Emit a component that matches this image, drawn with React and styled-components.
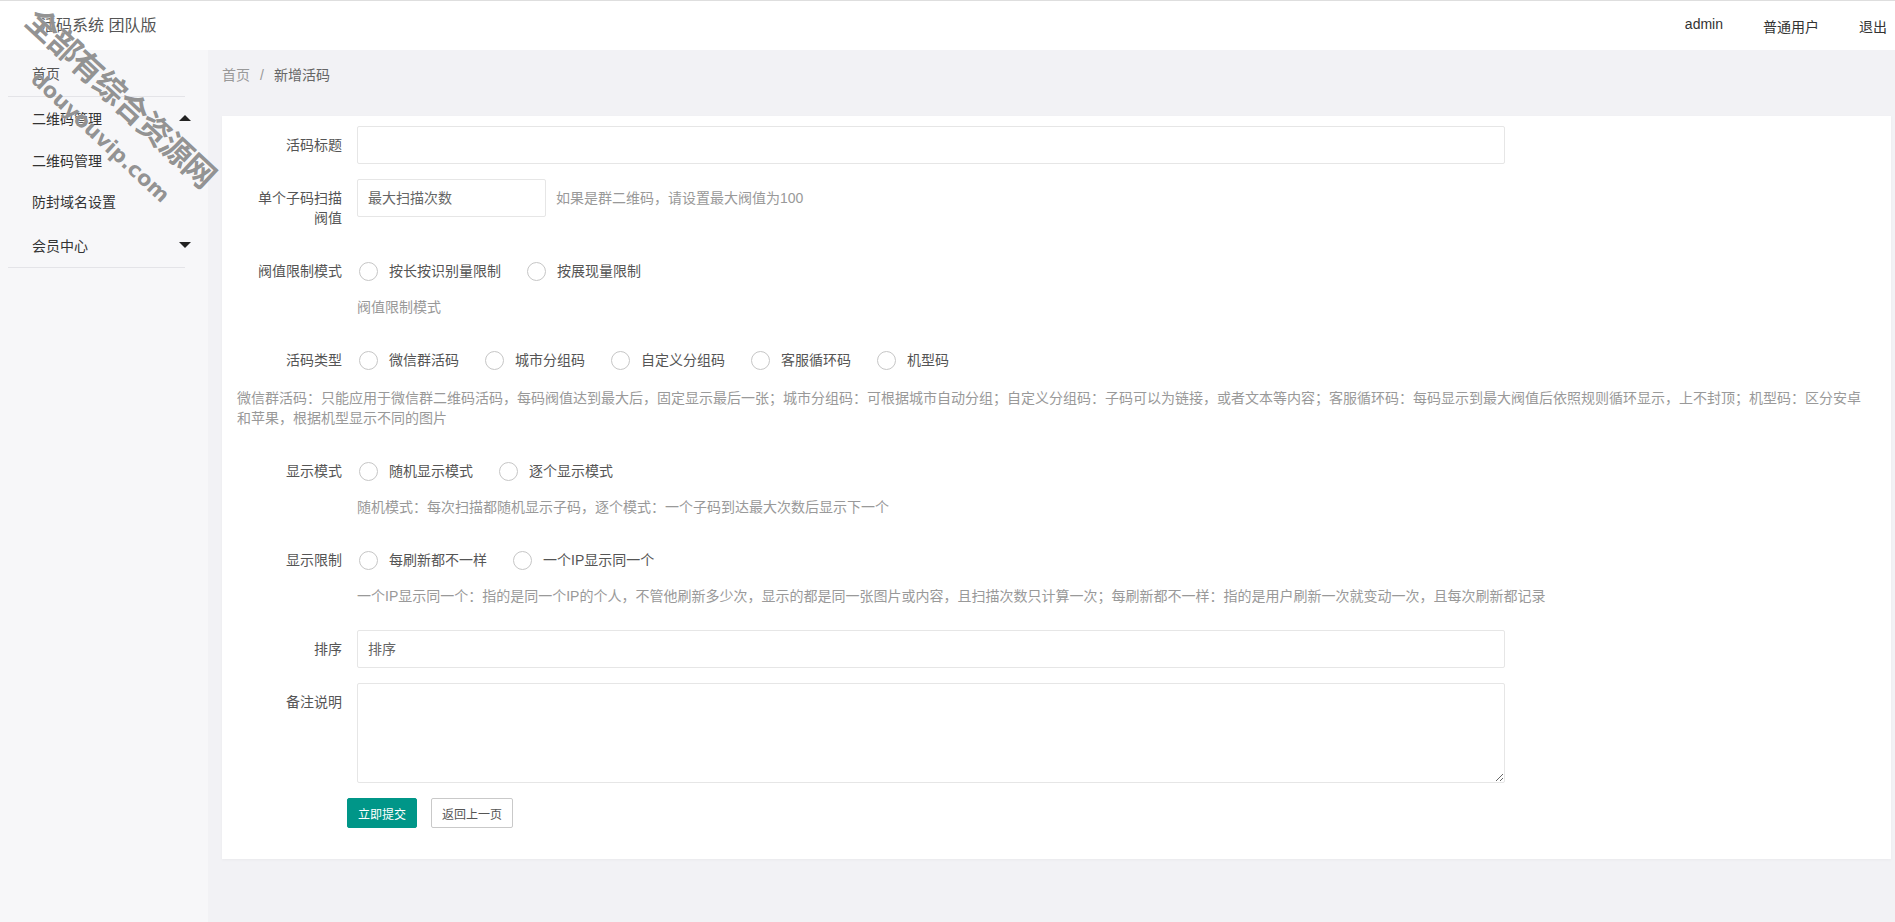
import React from "react";
import styled, { createGlobalStyle } from "styled-components";

const GlobalStyle = createGlobalStyle`
  html, body {
    margin: 0;
    padding: 0;
    background: #f2f2f5;
  }
  body {
    font-family: "Helvetica Neue", "Liberation Sans", "Noto Sans CJK SC", sans-serif;
    font-size: 14px;
    color: #333;
  }
  * {
    box-sizing: border-box;
  }
`;

const Page = styled.div`
  position: relative;
  min-height: 922px;
  display: flex;
  flex-direction: column;
  overflow: hidden;
`;

const Header = styled.header`
  height: 50px;
  background: #fff;
  border-top: 1px solid #dedede;
  display: flex;
  align-items: center;
  justify-content: space-between;
  padding: 0 8px 0 40px;
`;

const Logo = styled.div`
  font-size: 16px;
  color: #555;
  line-height: 20px;
`;

const HeaderNav = styled.nav`
  display: flex;
  gap: 40px;
  font-size: 14px;
  color: #333;
`;

const Body = styled.div`
  flex: 1;
  display: flex;
`;

const Sidebar = styled.aside`
  width: 208px;
  flex-shrink: 0;
  background: #f7f7f9;
  padding: 0 23px 0 8px;
`;

const NavItem = styled.div`
  height: ${(p) => p.$h || 42}px;
  display: flex;
  align-items: center;
  justify-content: space-between;
  padding: 0 0 0 24px;
  color: ${(p) => p.$muted ? "#555" : "#333"};
  border-bottom: ${(p) => p.$line ? "1px solid #e4e4e8" : "none"};
`;

const Arrow = styled.span`
  width: 0;
  height: 0;
  margin-right: -6px;
  border-left: 6px solid transparent;
  border-right: 6px solid transparent;
  ${(p) => p.$up ? "border-bottom: 6px solid #222;" : "border-top: 6px solid #222;"}
`;

const Main = styled.main`
  flex: 1;
  padding: 0 4px 63px 14px;
`;

const Breadcrumb = styled.div`
  height: 66px;
  padding-top: 15px;
  line-height: 20px;
  font-size: 14px;
  color: #999;
  display: flex;
  gap: 10px;

  & > b {
    font-weight: normal;
    color: #666;
  }
`;

const Card = styled.section`
  background: #fff;
  padding: 10px 15px 16px;
  box-shadow: 0 1px 3px rgba(0, 0, 0, 0.04);
`;

const FormItem = styled.div`
  display: flex;
  align-items: flex-start;
  margin-bottom: ${(p) => p.$mb ?? 15}px;
`;

const Label = styled.label`
  width: 120px;
  flex-shrink: 0;
  padding: 9px 15px;
  line-height: 20px;
  text-align: right;
  color: #555;
  font-size: 14px;
`;

const Block = styled.div`
  flex: 1;
  min-width: 0;
  display: ${(p) => p.$inline ? "flex" : "block"};
  align-items: flex-start;
`;

const Input = styled.input`
  display: block;
  width: ${(p) => p.$w || "1148px"};
  height: 38px;
  border: 1px solid #e6e6e6;
  border-radius: 2px;
  padding: 0 10px;
  font: inherit;
  font-size: 14px;
  color: #333;
  background: #fff;
  outline: none;

  &::placeholder {
    color: #666;
  }
`;

const TextArea = styled.textarea`
  display: block;
  width: 1148px;
  height: 100px;
  border: 1px solid #e6e6e6;
  border-radius: 2px;
  padding: 6px 10px;
  font: inherit;
  resize: vertical;
  outline: none;
`;

const Aux = styled.div`
  color: #999;
  font-size: 14px;
  line-height: 20px;
  padding: ${(p) => p.$side ? "9px 0 9px 10px" : "7px 0 9px"};
`;

const LongHelp = styled.p`
  margin: 0 0 15px;
  padding: 9px 0;
  max-width: 1630px;
  color: #999;
  font-size: 14px;
  line-height: 20px;
`;

const RadioGroup = styled.div`
  height: 38px;
  display: flex;
  align-items: center;
  padding-left: 2px;
`;

const RadioItem = styled.span`
  display: flex;
  align-items: center;
  margin-right: 26px;
  color: #555;
  font-size: 14px;
  line-height: 20px;
`;

const Circle = styled.i`
  width: 19px;
  height: 19px;
  border: 1px solid #c6c6c6;
  border-radius: 50%;
  margin-right: 11px;
`;

const ButtonRow = styled.div`
  display: flex;
  gap: 14px;
  margin: 0 0 15px 110px;
`;

const Button = styled.button`
  height: 30px;
  padding: 0 10px;
  font: inherit;
  font-size: 12px;
  border-radius: 2px;
  cursor: pointer;
  background: ${(p) => p.$primary ? "#009688" : "#fff"};
  color: ${(p) => p.$primary ? "#fff" : "#555"};
  border: 1px solid ${(p) => p.$primary ? "#009688" : "#c9c9c9"};
`;

const Watermark = styled.div`
  position: absolute;
  left: 31px;
  top: -2px;
  transform: rotate(43deg);
  transform-origin: 0 17px;
  pointer-events: none;
  color: rgba(105, 105, 105, 0.72);
  font-weight: 700;
  text-shadow: 0 0 1px #fff;
  white-space: nowrap;
`;

const MarkTitle = styled.div`
  font-size: 32px;
  line-height: 34px;
  letter-spacing: -1.5px;
`;

const MarkUrl = styled.div`
  font-family: "DejaVu Sans", "Liberation Sans", sans-serif;
  font-size: 21px;
  line-height: 24px;
  margin: 13px 0 0 44px;
`;

const Radios = ({ items }) => (
  <RadioGroup>
    {items.map((t) => (
      <RadioItem key={t}>
        <Circle />
        {t}
      </RadioItem>
    ))}
  </RadioGroup>
);

export default function App() {
  return (
    <Page>
      <GlobalStyle />
      <Header>
        <Logo>活码系统 团队版</Logo>
        <HeaderNav>
          <span>admin</span>
          <span>普通用户</span>
          <span>退出</span>
        </HeaderNav>
      </Header>
      <Body>
        <Sidebar>
          <NavItem $h={47} $line $muted>首页</NavItem>
          <NavItem>
            二维码管理
            <Arrow $up />
          </NavItem>
          <NavItem $h={41}>二维码管理</NavItem>
          <NavItem>防封域名设置</NavItem>
          <NavItem $h={46} $line>
            会员中心
            <Arrow />
          </NavItem>
        </Sidebar>
        <Main>
          <Breadcrumb>
            <span>首页</span>
            <span>/</span>
            <b>新增活码</b>
          </Breadcrumb>
          <Card>
            <FormItem>
              <Label>活码标题</Label>
              <Block>
                <Input />
              </Block>
            </FormItem>
            <FormItem>
              <Label>单个子码扫描阀值</Label>
              <Block $inline>
                <Input $w="189px" placeholder="最大扫描次数" />
                <Aux $side>如果是群二维码，请设置最大阀值为100</Aux>
              </Block>
            </FormItem>
            <FormItem>
              <Label>阀值限制模式</Label>
              <Block>
                <Radios items={["按长按识别量限制", "按展现量限制"]} />
                <Aux>阀值限制模式</Aux>
              </Block>
            </FormItem>
            <FormItem $mb={0}>
              <Label>活码类型</Label>
              <Block>
                <Radios items={["微信群活码", "城市分组码", "自定义分组码", "客服循环码", "机型码"]} />
              </Block>
            </FormItem>
            <LongHelp>
              微信群活码：只能应用于微信群二维码活码，每码阀值达到最大后，固定显示最后一张；城市分组码：可根据城市自动分组；自定义分组码：子码可以为链接，或者文本等内容；客服循环码：每码显示到最大阀值后依照规则循环显示，上不封顶；机型码：区分安卓和苹果，根据机型显示不同的图片
            </LongHelp>
            <FormItem>
              <Label>显示模式</Label>
              <Block>
                <Radios items={["随机显示模式", "逐个显示模式"]} />
                <Aux>随机模式：每次扫描都随机显示子码，逐个模式：一个子码到达最大次数后显示下一个</Aux>
              </Block>
            </FormItem>
            <FormItem>
              <Label>显示限制</Label>
              <Block>
                <Radios items={["每刷新都不一样", "一个IP显示同一个"]} />
                <Aux>一个IP显示同一个：指的是同一个IP的个人，不管他刷新多少次，显示的都是同一张图片或内容，且扫描次数只计算一次；每刷新都不一样：指的是用户刷新一次就变动一次，且每次刷新都记录</Aux>
              </Block>
            </FormItem>
            <FormItem>
              <Label>排序</Label>
              <Block>
                <Input placeholder="排序" />
              </Block>
            </FormItem>
            <FormItem>
              <Label>备注说明</Label>
              <Block>
                <TextArea />
              </Block>
            </FormItem>
            <ButtonRow>
              <Button $primary>立即提交</Button>
              <Button>返回上一页</Button>
            </ButtonRow>
          </Card>
        </Main>
      </Body>
      <Watermark>
        <MarkTitle>全部有综合资源网</MarkTitle>
        <MarkUrl>douyouvip.com</MarkUrl>
      </Watermark>
    </Page>
  );
}
